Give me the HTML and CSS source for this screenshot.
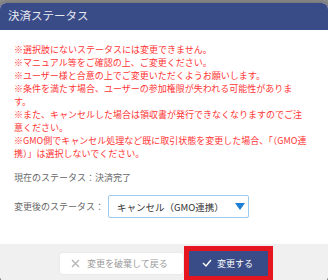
FILE: index.html
```html
<!DOCTYPE html>
<html lang="ja">
<head>
    <meta charset="UTF-8">
    <meta name="viewport" content="width=device-width, initial-scale=1.0">
    <title>決済ステータス</title>
    <link rel="stylesheet" href="styles.css">
</head>
<body>
    <div class="modal">
        <div class="modal-header">決済ステータス</div>

        <div class="modal-body">
            <div class="notes">
                <p>※選択肢にないステータスには変更できません。</p>
                <p>※マニュアル等をご確認の上、ご変更ください。</p>
                <p>※ユーザー様と合意の上でご変更いただくようお願いします。</p>
                <p>※条件を満たす場合、ユーザーの参加権限が失われる可能性がありま<br>す。</p>
                <p>※また、キャンセルした場合は領収書が発行できなくなりますのでご注<br>意ください。</p>
                <p>※GMO側でキャンセル処理など既に取引状態を変更した場合、「（GMO連<br>携）」は選択しないでください。</p>
            </div>

            <div class="status-now">現在のステータス：決済完了</div>

            <div class="status-row">
                <span class="status-label">変更後のステータス：</span>
                <div class="select">
                    <span>キャンセル（GMO連携）</span>
                    <span class="select-arrow"></span>
                </div>
            </div>
        </div>

        <div class="modal-footer">
            <button class="btn btn-cancel">
                <svg width="9" height="9" viewBox="0 0 9 9"><path d="M1 1L8 8M8 1L1 8" stroke="#b4b4b4" stroke-width="1.3" fill="none"/></svg>
                変更を破棄して戻る
            </button>
            <button class="btn btn-submit">
                <svg width="10" height="8" viewBox="0 0 10 8"><path d="M1 4L4 7L9 1" stroke="#fff" stroke-width="1.4" fill="none"/></svg>
                変更する
            </button>
        </div>
    </div>
</body>
</html>
```

FILE: styles.css
```css
body {
    margin: 0;
    padding: 0;
    background-color: #8e8e8e;
    font-family: "Noto Sans CJK JP", "Noto Sans", sans-serif;
    overflow: hidden;
}
.modal {
    margin-top: 3px;
    width: 328px;
    background: #fff;
    border-radius: 6px;
    overflow: hidden;
    box-shadow: 0 0 6px rgba(0, 0, 0, 0.3);
}
.modal-header {
    height: 27px;
    line-height: 25px;
    padding-left: 8px;
    background-color: #3a4c88;
    color: #e6e8f0;
    font-size: 11.5px;
}
.modal-body {
    padding: 13px 14px 26px;
}
.notes {
    color: #ff3535;
    font-size: 9px;
    line-height: 13px;
    white-space: nowrap;
}
.notes p {
    margin: 0;
}
.status-now {
    margin-top: 11px;
    color: #666;
    font-size: 9px;
    line-height: 13px;
}
.status-row {
    display: flex;
    align-items: center;
    margin-top: 11px;
}
.status-label {
    width: 94px;
    color: #666;
    font-size: 9px;
}
.select {
    display: flex;
    align-items: center;
    justify-content: space-between;
    box-sizing: border-box;
    width: 141px;
    height: 23px;
    padding: 0 3px 0 8px;
    border: 1px solid #9fcbef;
    border-radius: 2px;
    color: #333;
    font-size: 9.5px;
}
.select-arrow {
    width: 0;
    height: 0;
    border-left: 5px solid transparent;
    border-right: 5px solid transparent;
    border-top: 7px solid #1c7fd6;
}
.modal-footer {
    display: flex;
    justify-content: center;
    align-items: center;
    gap: 6px;
    height: 38px;
    background-color: #f0f0f0;
}
.btn {
    display: flex;
    align-items: center;
    border: none;
    border-radius: 3px;
    font-family: "Noto Sans CJK JP", "Noto Sans", sans-serif;
    font-size: 9px;
    padding: 0;
}
.btn-cancel {
    height: 21px;
    width: 123px;
    padding-left: 11px;
    gap: 7px;
    background: #fff;
    color: #9a9a9a;
    box-shadow: 0 0 2px rgba(0, 0, 0, 0.08);
}
.btn-submit {
    height: 25px;
    width: 79px;
    padding-left: 13px;
    gap: 5px;
    background-color: #3a4c88;
    color: #fff;
    border-radius: 0;
    outline: 5px solid #e5161f;
}
```
